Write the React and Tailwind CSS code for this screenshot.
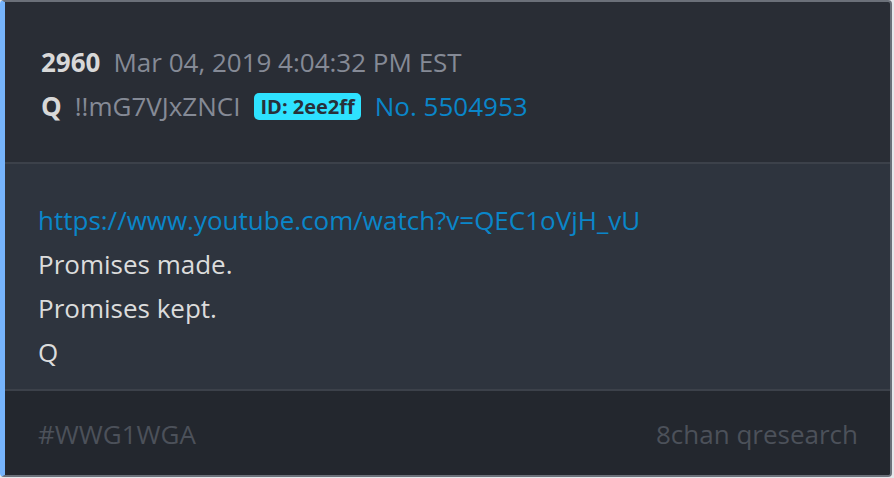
import React from "react";

export default function App() {
  return (
    <div className="w-[894px] h-[478px] bg-[#e5e7eb]" style={{ fontFamily: "'Open Sans', 'Noto Sans', sans-serif" }}>
      <div className="w-[892px] h-[477px] flex flex-col rounded-[4px] overflow-hidden border-2 border-[#6b7079] border-l-[5px] border-l-[#76b4fc] bg-[#292d35]">
        {/* header */}
        <div className="h-[160px] shrink-0 flex flex-col justify-center gap-[14px] pl-[36px] pt-[4px] text-[26px] leading-[30px]">
          <div className="flex items-baseline">
            <span className="font-bold text-[#d8d8d8]">2960</span>
            <span className="ml-[13px] text-[#858a96]">Mar 04, 2019 4:04:32 PM EST</span>
          </div>
          <div className="flex items-center">
            <span className="font-bold text-[#d8d8d8]">Q</span>
            <span className="ml-[13px] text-[#858a96]">!!mG7VJxZNCI</span>
            <span className="ml-[14px] rounded-[5px] bg-[#2ee2ff] px-[6px] text-[20px] leading-[27px] font-bold text-[#28303a]">ID: 2ee2ff</span>
            <span className="ml-[14px] text-[#0a86c9]">No. 5504953</span>
          </div>
        </div>

        <div className="h-[2px] bg-[#3c414a] shrink-0" />

        {/* body */}
        <div className="flex-1 bg-[#2e343e] pl-[33px] pt-[41px] text-[26px] leading-[30px] text-[#dcdcdc] flex flex-col gap-[14px]">
          <a className="text-[#0a86c9]">https://www.youtube.com/watch?v=QEC1oVjH_vU</a>
          <p>Promises made.</p>
          <p>Promises kept.</p>
          <p>Q</p>
        </div>

        <div className="h-[2px] bg-[#3c414a] shrink-0" />

        {/* footer */}
        <div className="h-[84px] shrink-0 bg-[#23272e] flex items-center justify-between pl-[33px] pr-[32px] pt-[3px] text-[26px] text-[#4c515a]">
          <span>#WWG1WGA</span>
          <span>8chan qresearch</span>
        </div>
      </div>
    </div>
  );
}
